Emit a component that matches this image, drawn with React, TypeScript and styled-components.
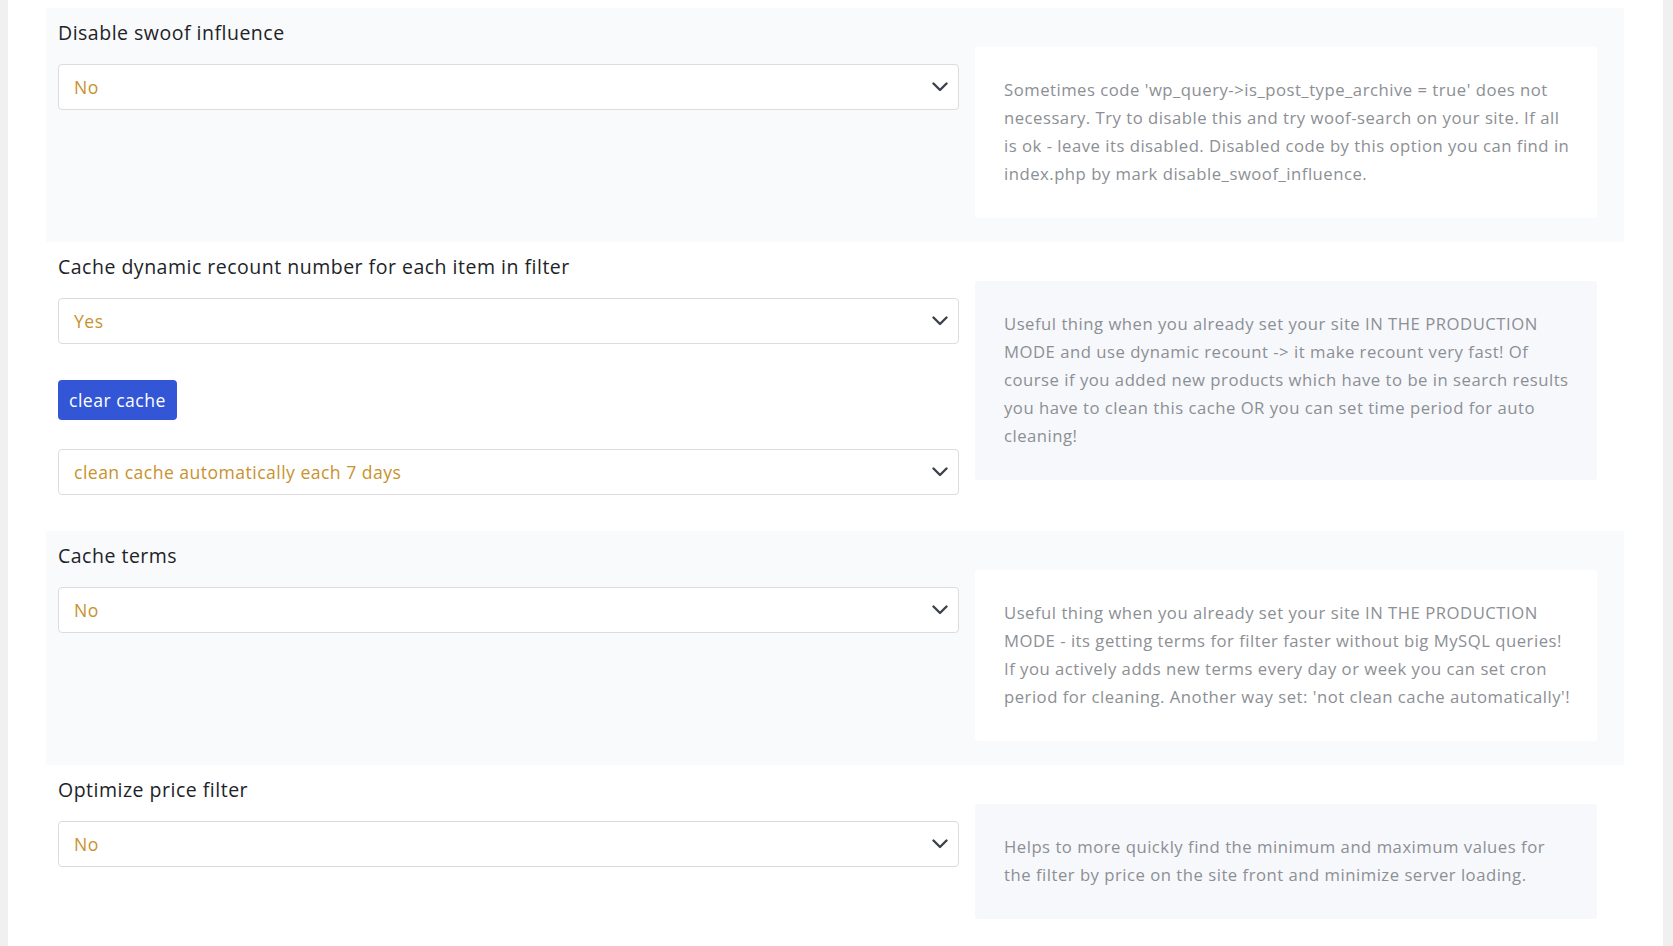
import React from 'react';
import styled, { createGlobalStyle } from 'styled-components';

const GlobalStyle = createGlobalStyle`
  html, body {
    margin: 0;
    padding: 0;
    background: #f0f0f1;
  }
  body {
    font-family: "Open Sans", Lato, sans-serif;
  }
`;

const Page = styled.div`
  margin-left: 8px;
  width: 1655px;
  min-height: 946px;
  background: #ffffff;
  padding: 8px 39px 0 38px;
  box-sizing: border-box;
`;

const Section = styled.div<{ $shaded?: boolean }>`
  display: flex;
  align-items: flex-start;
  gap: 16px;
  padding: 12px 27px 24px 12px;
  background: ${(p) => (p.$shaded ? '#f9fafc' : '#ffffff')};
`;

const LeftCol = styled.div`
  width: 901px;
  flex-shrink: 0;
  padding-bottom: 12px;
`;

const RightCol = styled.div`
  flex: 1;
  padding-top: 27px;
`;

const Title = styled.h4`
  margin: 0 0 18px;
  font-size: 19.5px;
  line-height: 26px;
  letter-spacing: 0.5px;
  font-weight: 400;
  color: #1d2327;
`;

const SelectBox = styled.div<{ $gap?: number }>`
  display: flex;
  align-items: center;
  justify-content: space-between;
  height: 46px;
  box-sizing: border-box;
  margin-top: ${(p) => p.$gap ?? 0}px;
  padding: 0 10px 0 15px;
  background: #ffffff;
  border: 1px solid #dcdcde;
  border-radius: 4px;
  font-size: 17.6px;
  letter-spacing: 0.46px;
  color: #c8922e;
`;

const Button = styled.button`
  display: block;
  margin-top: 36px;
  height: 40px;
  padding: 0 11px;
  background: #3256d6;
  color: #ffffff;
  border: none;
  border-radius: 4px;
  font-family: inherit;
  font-size: 17.6px;
  letter-spacing: 0.48px;
  cursor: pointer;
`;

const Desc = styled.div<{ $shaded?: boolean }>`
  padding: 29px 24px 30px 29px;
  background: ${(p) => (p.$shaded ? '#ffffff' : '#f7f8fc')};
  border-radius: 3px;
  font-size: 16.7px;
  line-height: 28px;
  letter-spacing: 0.5px;
  color: #8c8f94;
`;

const Chevron = () => (
  <svg width="16" height="10" viewBox="0 0 16 10" fill="none">
    <polyline points="1.5,1.5 8,8 14.5,1.5" stroke="#3c434a" strokeWidth="2.4" strokeLinecap="round" strokeLinejoin="round" />
  </svg>
);

const Select = ({ value, gap }: { value: string; gap?: number }) => (
  <SelectBox $gap={gap}>
    <span>{value}</span>
    <Chevron />
  </SelectBox>
);

const App = () => {
  return (
    <>
      <GlobalStyle />
      <Page>
        <Section $shaded>
          <LeftCol>
            <Title>Disable swoof influence</Title>
            <Select value="No" />
          </LeftCol>
          <RightCol>
            <Desc $shaded>
              Sometimes code 'wp_query-&gt;is_post_type_archive = true' does not necessary. Try to disable this and
              try woof-search on your site. If all is ok - leave its disabled. Disabled code by this option you can
              find in index.php by mark disable_swoof_influence.
            </Desc>
          </RightCol>
        </Section>

        <Section>
          <LeftCol>
            <Title>Cache dynamic recount number for each item in filter</Title>
            <Select value="Yes" />
            <Button>clear cache</Button>
            <Select value="clean cache automatically each 7 days" gap={29} />
          </LeftCol>
          <RightCol>
            <Desc>
              Useful thing when you already set your site IN THE PRODUCTION MODE and use dynamic recount -&gt; it
              make recount very fast! Of course if you added new products which have to be in search results you
              have to clean this cache OR you can set time period for auto cleaning!
            </Desc>
          </RightCol>
        </Section>

        <Section $shaded>
          <LeftCol>
            <Title>Cache terms</Title>
            <Select value="No" />
          </LeftCol>
          <RightCol>
            <Desc $shaded>
              Useful thing when you already set your site IN THE PRODUCTION MODE - its getting terms for filter
              faster without big MySQL queries! If you actively adds new terms every day or week you can set cron
              period for cleaning. Another way set: 'not clean cache automatically'!
            </Desc>
          </RightCol>
        </Section>

        <Section>
          <LeftCol>
            <Title>Optimize price filter</Title>
            <Select value="No" />
          </LeftCol>
          <RightCol>
            <Desc>
              Helps to more quickly find the minimum and maximum values for the filter by price on the site front
              and minimize server loading.
            </Desc>
          </RightCol>
        </Section>
      </Page>
    </>
  );
};

export default App;
